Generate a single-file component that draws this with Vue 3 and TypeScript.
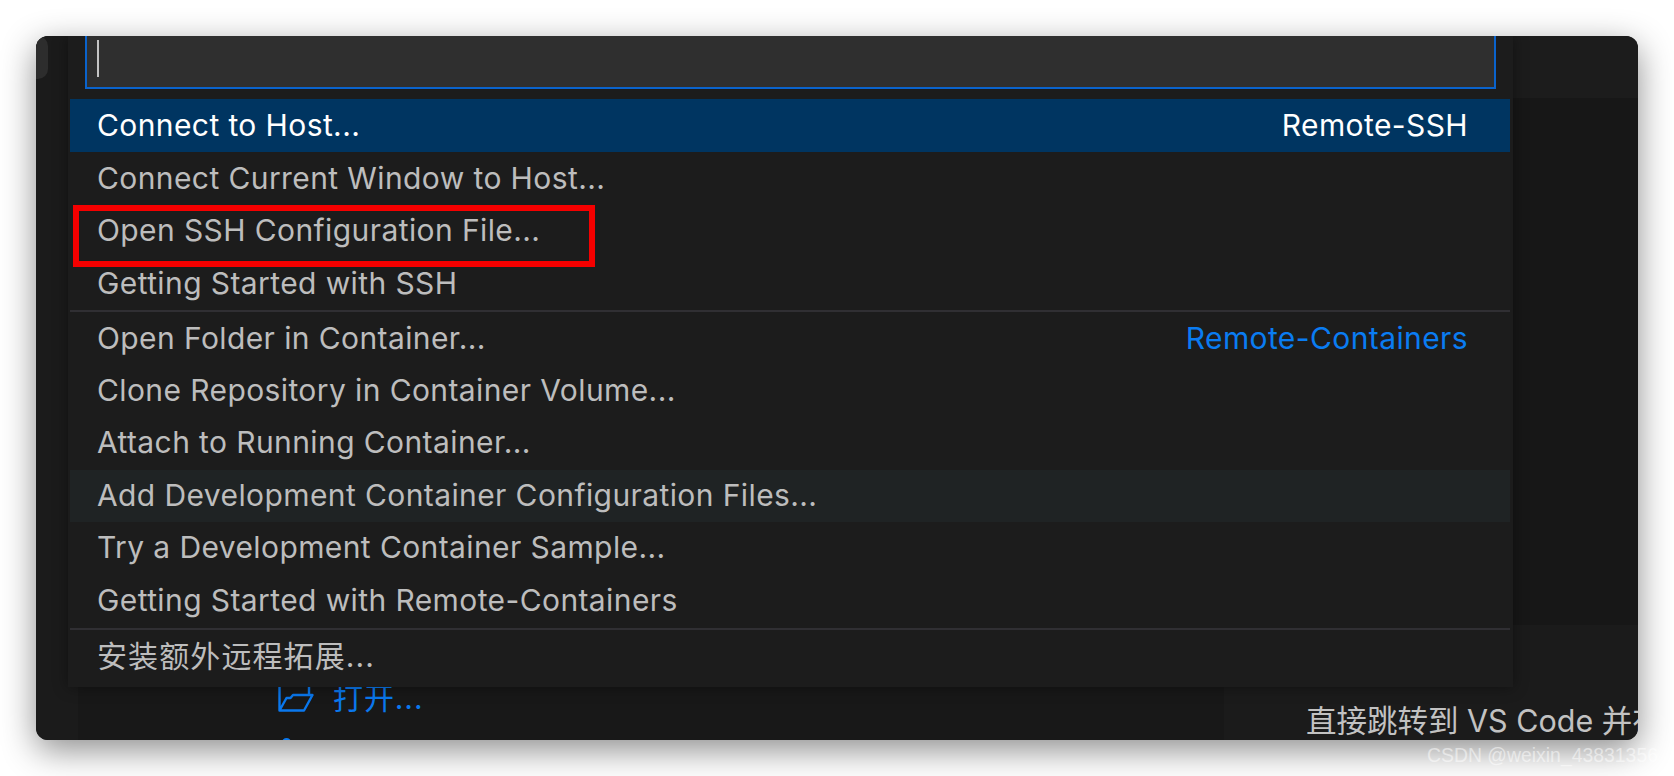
<template>
  <div class="page">
    <div class="window">
      <aside class="activity"><div class="tab-stub"></div></aside>
      <main class="editor">
        <div class="open-link">
          <svg class="folder" viewBox="0 0 36 33" width="36" height="33" fill="none" stroke="#0a78ee" stroke-width="2.4" stroke-linejoin="round">
            <path d="M1.5 0V30.5H26L34.5 15H15L12.5 18H8.5L1.5 30.5" />
            <path d="M31 0V15" />
          </svg>
          <span>打开...</span>
        </div>
        <span class="dot"></span>
      </main>
      <section class="side">
        <div class="side-top"></div>
        <div class="side-mid"></div>
        <div class="side-bottom"><span class="hint">直接跳转到 VS Code 并在本地打开</span></div>
      </section>

      <div class="quick-pick">
        <div class="input"><i class="caret"></i></div>
        <ul class="list">
          <template v-for="(item, idx) in items" :key="idx">
            <li v-if="item.sep" class="sep"></li>
            <li v-else class="row" :class="{ active: item.active, hover: item.hover, boxed: item.boxed }">
              <span>{{ item.label }}</span>
              <span v-if="item.tag" class="tag">{{ item.tag }}</span>
            </li>
          </template>
        </ul>
      </div>
    </div>
    <div class="watermark">CSDN @weixin_43831356</div>
  </div>
</template>

<script setup lang="ts">
interface Item {
  label?: string
  tag?: string
  active?: boolean
  hover?: boolean
  boxed?: boolean
  sep?: boolean
}

const items: Item[] = [
  { label: 'Connect to Host...', tag: 'Remote-SSH', active: true },
  { label: 'Connect Current Window to Host...' },
  { label: 'Open SSH Configuration File...', boxed: true },
  { label: 'Getting Started with SSH' },
  { sep: true },
  { label: 'Open Folder in Container...', tag: 'Remote-Containers' },
  { label: 'Clone Repository in Container Volume...' },
  { label: 'Attach to Running Container...' },
  { label: 'Add Development Container Configuration Files...', hover: true },
  { label: 'Try a Development Container Sample...' },
  { label: 'Getting Started with Remote-Containers' },
  { sep: true },
  { label: '安装额外远程拓展...' }
]
</script>

<style>
html, body { margin: 0; background: #fff; overflow: hidden; }
</style>

<style scoped>
.page { position: relative; width: 1674px; height: 776px; padding: 36px; box-sizing: border-box; background: #fff; overflow: hidden; font-family: Inter, "Noto Sans CJK SC", sans-serif; }
.window { position: relative; display: flex; height: 704px; border-radius: 12px; overflow: hidden; background: #1a1a1a; }
.page::before { content: ""; position: absolute; left: 36px; top: 36px; width: 1602px; height: 704px; border-radius: 12px; box-shadow: 0 10px 34px rgba(0,0,0,0.45); }
.activity { width: 42px; flex: none; background: #1b1b1b; }
.tab-stub { width: 12px; height: 43px; background: #2d2d2d; border-radius: 0 10px 10px 0; }
.editor { position: relative; width: 1146px; flex: none; background: #181818; }
.open-link { position: absolute; left: 200px; top: 644px; display: flex; align-items: flex-start; gap: 19px; color: #0a78ee; font-size: 30px; line-height: 36px; letter-spacing: 0.9px; }
.folder { flex: none; }
.dot { position: absolute; left: 204px; top: 702px; width: 9px; height: 9px; border-radius: 50%; background: #0a78ee; }
.side { flex: 1; display: flex; flex-direction: column; }
.side-top { height: 62px; background: #1c1c1c; }
.side-mid { height: 527px; background: #171717; }
.side-bottom { flex: 1; display: flex; align-items: flex-end; padding: 0 0 1px 82px; background: #1b1b1b; overflow: hidden; }
.hint { color: #c2c2c2; font-size: 30.5px; line-height: 36px; white-space: nowrap; }
.quick-pick { position: absolute; left: 32px; top: 0; width: 1445px; height: 651px; padding: 0 3px 0 2px; box-sizing: border-box; background: #1c1c1c; box-shadow: 0 0 14px rgba(0,0,0,0.4); }
.input { height: 53px; margin: 0 14px 0 15px; box-sizing: border-box; padding-left: 10px; border: 2px solid #0a63cc; border-top: 0; background: #2f2f2f; }
.caret { display: block; width: 2px; height: 37px; position: relative; top: 4px; background: #c4c4c4; }
.list { margin: 10px 0 0; padding: 0; list-style: none; }
.row { position: relative; display: flex; justify-content: space-between; align-items: center; height: 52.5px; padding: 0 42px 0 27px; color: #bdbdbd; font-size: 30px; letter-spacing: 0.4px; white-space: nowrap; }
.row > span { position: relative; }
.row:nth-child(n+7) > span { top: -1px; }
.row:last-child { letter-spacing: 1.1px; }
.row:last-child > span { top: -2px; }
.row.active { background: #003561; color: #fff; }
.row.active .tag { color: #fff; }
.row.hover { background: #1f2324; }
.tag { color: #0a7cf2; }
.row.boxed::after { content: ""; position: absolute; left: 3px; top: 1px; width: 522px; height: 62px; box-sizing: border-box; border: 6px solid #f50000; }
.sep { height: 2px; margin: 1px 0 0; background: #302f33; }
.watermark { position: absolute; left: 1427px; top: 744px; color: rgba(255,255,255,0.5); font: 19.4px "Liberation Sans", sans-serif; white-space: nowrap; }
</style>
